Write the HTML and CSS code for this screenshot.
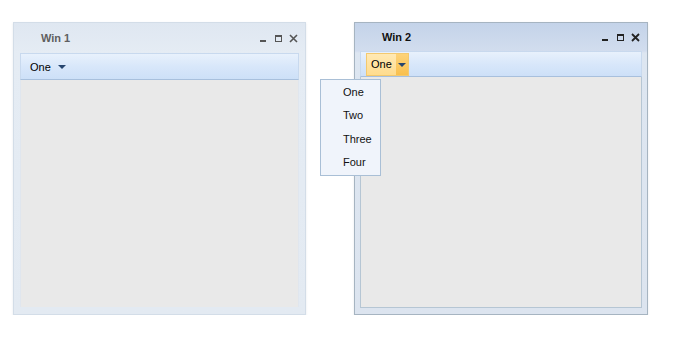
FILE: index.html
```html
<!DOCTYPE html>
<html lang="en">

<head>
    <meta charset="UTF-8">
    <meta name="viewport" content="width=device-width, initial-scale=1.0">
    <link rel="stylesheet" href="styles.css">
    <title>Windows</title>
</head>

<body>
    <div class="desk">
        <div class="win">
            <div class="win-head">
                <span class="win-title">Win 1</span>
                <div class="tools">
                    <svg width="9" height="9" viewBox="0 0 9 9"><rect x="1" y="6" width="6" height="2" fill="#555"/></svg>
                    <svg width="9" height="9" viewBox="0 0 9 9"><rect x="1.5" y="1.5" width="6" height="6" fill="none" stroke="#555" stroke-width="1"/><rect x="1" y="1" width="7" height="2" fill="#555"/></svg>
                    <svg width="9" height="9" viewBox="0 0 9 9"><path d="M1 1 L8 8 M8 1 L1 8" stroke="#555" stroke-width="1.6"/></svg>
                </div>
            </div>
            <div class="win-body">
                <div class="tbar">
                    <span class="btn">One <i class="arrow"></i></span>
                </div>
                <div class="content"></div>
            </div>
        </div>

        <div class="win active">
            <div class="win-head">
                <span class="win-title">Win 2</span>
                <div class="tools">
                    <svg width="9" height="9" viewBox="0 0 9 9"><rect x="1" y="6" width="6" height="2" fill="#222"/></svg>
                    <svg width="9" height="9" viewBox="0 0 9 9"><rect x="1.5" y="1.5" width="6" height="6" fill="none" stroke="#222" stroke-width="1"/><rect x="1" y="1" width="7" height="2" fill="#222"/></svg>
                    <svg width="9" height="9" viewBox="0 0 9 9"><path d="M1 1 L8 8 M8 1 L1 8" stroke="#222" stroke-width="1.8"/></svg>
                </div>
            </div>
            <div class="win-body">
                <div class="tbar">
                    <span class="btn on"><span class="btn-text">One</span><span class="btn-split"><i class="arrow"></i></span></span>
                </div>
                <div class="content"></div>
            </div>
        </div>
    </div>

    <!-- menu abierto del boton de Win 2 -->
    <ul class="menu">
        <li>One</li>
        <li>Two</li>
        <li>Three</li>
        <li>Four</li>
    </ul>
</body>

</html>
```

FILE: styles.css
```css
body {
    font-family: "Liberation Sans", Arial, sans-serif;
    font-size: 11px;
    background-color: #fff;
    color: #000;
    margin: 0;
}

.desk {
    display: flex;
    gap: 48px;
    padding: 22px 0 0 13px;
}

.win {
    width: 291px;
    height: 291px;
    border: 1px solid #d3dde8;
    background: linear-gradient(to bottom, #dfe7f1 0, #e5ecf4 30px, #e3eaf2 100%);
    display: flex;
    flex-direction: column;
    box-shadow: 0 1px 2px rgba(180, 190, 200, 0.35);
}

.win-head {
    height: 28px;
    display: flex;
    align-items: center;
    justify-content: space-between;
    padding: 0 7px 0 27px;
}

.win-title {
    font-weight: bold;
    color: #5f5f5f;
    font-size: 11px;
    padding-top: 1px;
}

.tools {
    display: flex;
    gap: 6px;
    padding-top: 2px;
}

.win-body {
    flex: 1;
    display: flex;
    flex-direction: column;
    margin: 2px 6px 7px 6px;
}

.tbar {
    height: 25px;
    display: flex;
    align-items: center;
    padding-left: 3px;
    background: linear-gradient(to bottom, #e8f1fc 0, #d8e7fa 50%, #cde0f8 100%);
    border: 1px solid #c8d9ee;
    border-bottom-color: #a8c0dd;
}

.btn {
    display: flex;
    align-items: center;
    height: 21px;
    padding: 0 6px 0 6px;
    gap: 7px;
}

.arrow {
    display: inline-block;
    width: 0;
    height: 0;
    border-left: 4px solid transparent;
    border-right: 4px solid transparent;
    border-top: 4px solid #26456e;
    margin-top: 1px;
}

.content {
    flex: 1;
    background-color: #e9e9e9;
    border-left: 1px solid #e0e6ee;
    border-right: 1px solid #e0e6ee;
}

/* ventana activa */
.active {
    width: 292px;
    border-color: #a6b4c1;
    background: linear-gradient(to bottom, #c4d3e9 0, #d2ddee 28px, #dde6f1 30px, #dce4ef 100%);
}

.active .win-head {
    height: 27px;
}

.active .win-title {
    color: #111;
}

.active .win-body {
    margin: 1px 5px 6px 5px;
}

.active .tbar {
    height: 24px;
    padding-left: 5px;
}

.active .content {
    border: 1px solid #b6c6d4;
    border-top: none;
}

.btn.on {
    padding: 0;
    gap: 0;
    border: 1px solid #f3c96f;
    background: linear-gradient(to bottom, #ffe9b4 0, #ffdc8e 100%);
}

.btn-text {
    padding: 0 4px 0 4px;
}

.btn-split {
    height: 100%;
    display: flex;
    align-items: center;
    padding: 0 2px;
    background: linear-gradient(to bottom, #fdd37a 0, #f9c04e 100%);
}

.menu {
    position: absolute;
    left: 320px;
    top: 79px;
    width: 59px;
    margin: 0;
    padding: 1px 0 1px 0;
    list-style: none;
    background-color: #f0f4fb;
    border: 1px solid #a9bfd6;
}

.menu li {
    height: 23.25px;
    line-height: 23px;
    padding-left: 22px;
    color: #111;
}
```
